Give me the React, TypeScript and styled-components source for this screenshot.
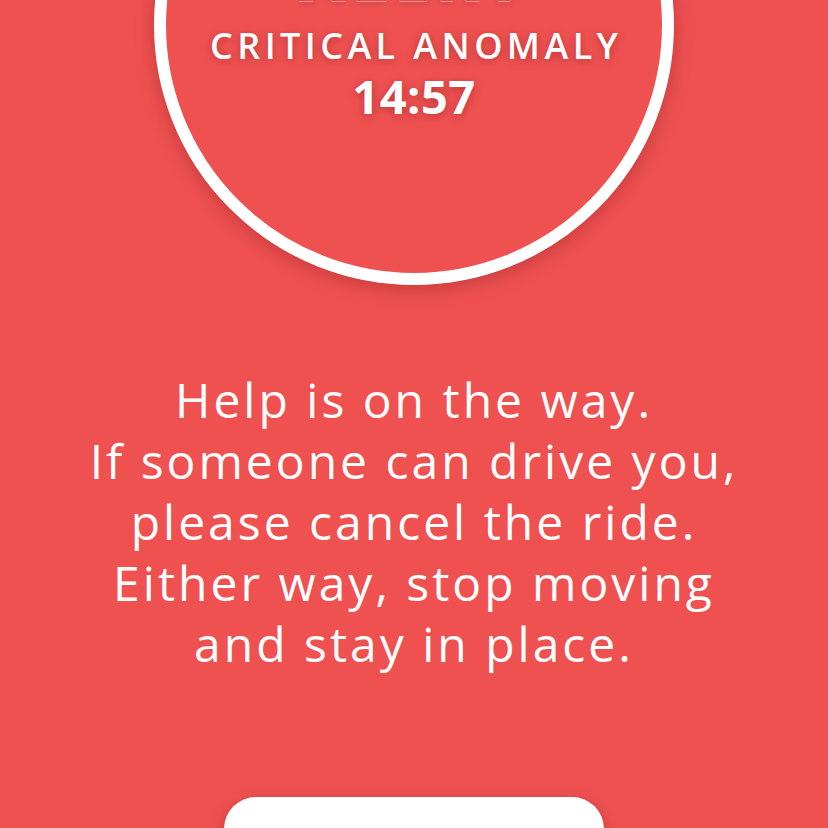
import React from "react";
import styled, { createGlobalStyle } from "styled-components";

const RED = "#ef5151";

const Global = createGlobalStyle`
  html, body {
    margin: 0;
    padding: 0;
    background: ${RED};
    overflow: hidden;
  }
  * { box-sizing: border-box; }
`;

const Page = styled.main`
  width: 828px;
  height: 828px;
  overflow: hidden;
  background: ${RED};
  display: flex;
  flex-direction: column;
  align-items: center;
  font-family: "Open Sans", "Liberation Sans", sans-serif;
  color: #ffffff;
`;

const Badge = styled.section`
  flex: none;
  width: 520px;
  height: 520px;
  margin-top: -235px;
  border: 12px solid #ffffff;
  border-radius: 50%;
  background: ${RED};
  box-shadow: 0 4px 18px rgba(120, 20, 20, 0.35);
  display: flex;
  flex-direction: column;
  align-items: center;
  padding-top: 164px;
`;

const Title = styled.div`
  font-size: 64px;
  font-weight: 800;
  line-height: 72px;
  letter-spacing: 6px;
  color: #e94a4a;
  text-shadow: 0 1px 1px rgba(255, 255, 255, 0.4), 0 2px 6px rgba(0, 0, 0, 0.15);
`;

const Label = styled.div`
  margin-top: 11px;
  font-size: 36px;
  font-weight: 600;
  line-height: 44px;
  letter-spacing: 4.4px;
  text-indent: 4.4px;
  text-shadow: 0 2px 8px rgba(90, 10, 10, 0.35);
`;

const Timer = styled.div`
  font-size: 47px;
  font-weight: 700;
  line-height: 56px;
  letter-spacing: 0.5px;
  text-shadow: 0 2px 8px rgba(90, 10, 10, 0.35);
`;

const Message = styled.p`
  margin: 84px 0 0;
  text-align: center;
  font-size: 48px;
  line-height: 61px;
  font-weight: 400;
  letter-spacing: 3px;
`;

const ActionButton = styled.button`
  flex: none;
  margin-top: 123px;
  width: 380px;
  height: 100px;
  border: none;
  border-radius: 32px;
  background: #ffffff;
  box-shadow: 0 4px 14px rgba(120, 20, 20, 0.35);
  font-family: inherit;
  font-size: 28px;
  font-weight: 700;
  color: ${RED};
  padding-top: 60px;
`;

export default function App() {
  return (
    <>
      <Global />
      <Page>
        <Badge>
          <Title>ALERT</Title>
          <Label>CRITICAL ANOMALY</Label>
          <Timer>14:57</Timer>
        </Badge>
        <Message>
          Help is on the way.
          <br />
          If someone can drive you,
          <br />
          please cancel the ride.
          <br />
          Either way, stop moving
          <br />
          and stay in place.
        </Message>
        <ActionButton>CANCEL RIDE</ActionButton>
      </Page>
    </>
  );
}
